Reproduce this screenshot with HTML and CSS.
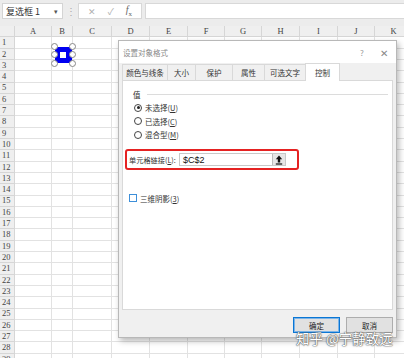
FILE: index.html
```html
<!DOCTYPE html>
<html lang="zh-CN">
<head>
    <meta charset="UTF-8">
    <title>设置对象格式</title>
    <link rel="stylesheet" href="styles.css">
</head>
<body>
    <div class="toolbar">
        <div class="namebox"><span>复选框 1</span><span class="caret">▾</span></div>
        <div class="dots">⋮</div>
        <div class="fbuttons">
            <span class="fb cancel">✕</span>
            <span class="fb ok">✓</span>
            <span class="fb fx"><i>f</i><sub>x</sub></span>
        </div>
        <div class="formula"></div>
    </div>

    <div class="sheet-wrap">
        <div class="sheet" id="sheet"></div>

        <div class="control">
            <div class="control-inner"></div>
            <span class="handle h1"></span><span class="handle h2"></span>
            <span class="handle h3"></span><span class="handle h4"></span>
            <span class="handle h5"></span><span class="handle h6"></span>
        </div>
    </div>

    <div class="dialog">
        <div class="dlg-title">
            <span class="dlg-caption">设置对象格式</span>
            <span class="dlg-help">?</span>
            <span class="dlg-close">✕</span>
        </div>
        <div class="tabs">
            <span class="tab" style="width:46px">颜色与线条</span>
            <span class="tab" style="width:29px">大小</span>
            <span class="tab" style="width:38px">保护</span>
            <span class="tab" style="width:33px">属性</span>
            <span class="tab" style="width:42px">可选文字</span>
            <span class="tab active" style="width:35px">控制</span>
        </div>
        <div class="panel">
            <div class="legend"><span>值</span><span class="rule"></span></div>
            <label class="radio checked"><span class="dot"></span>未选择(<u>U</u>)</label>
            <label class="radio"><span class="dot"></span>已选择(<u>C</u>)</label>
            <label class="radio"><span class="dot"></span>混合型(<u>M</u>)</label>

            <div class="link-box">
                <span class="link-label">单元格链接(<u>L</u>):</span>
                <div class="link-input">
                    <span>$C$2</span>
                    <span class="pick">
                        <svg width="8" height="10" viewBox="0 0 8 10">
                            <path d="M4 0.5 L7.2 4.2 H5.2 V7.5 H2.8 V4.2 H0.8 Z" fill="#111"/>
                            <rect x="0.8" y="8.4" width="6.4" height="1.2" fill="#111"/>
                        </svg>
                    </span>
                </div>
            </div>

            <label class="check"><span class="box"></span>三维阴影(<u>3</u>)</label>
        </div>
        <div class="dlg-footer">
            <span class="btn primary">确定</span>
            <span class="btn">取消</span>
        </div>
    </div>

    <div class="watermark">知乎 @宁静致远</div>

    <script>
        const sheet = document.getElementById('sheet');
        const cols = ['', 'A', 'B', 'C', 'D', 'E', 'F', 'G', 'H', 'I', 'J', 'K'];
        cols.forEach(function(c, i) {
            const d = document.createElement('div');
            d.className = i === 0 ? 'corner' : 'colhead';
            d.textContent = c;
            sheet.appendChild(d);
        });
        for (let r = 1; r <= 29; r++) {
            const h = document.createElement('div');
            h.className = 'rowhead';
            h.textContent = r;
            sheet.appendChild(h);
            for (let c = 1; c < cols.length; c++) {
                const cell = document.createElement('div');
                cell.className = 'cell';
                sheet.appendChild(cell);
            }
        }
    </script>
</body>
</html>
```

FILE: styles.css
```css
body { margin: 0; width: 404px; height: 358px; overflow: hidden; background: #fff; font-family: "Noto Sans CJK SC", "Noto Sans", sans-serif; font-size: 7.5px; color: #222; }

.toolbar { height: 26px; background: #ececec; display: flex; align-items: flex-start; padding-top: 3px; box-sizing: border-box; }
.namebox { margin-left: 2px; width: 61px; height: 16px; background: #fff; border: 1px solid #d4d4d4; box-sizing: border-box; display: flex; align-items: center; justify-content: space-between; padding: 0 4px 0 3px; font-size: 9px; color: #333; }
.namebox .caret { font-size: 7px; color: #555; }
.dots { width: 15px; text-align: center; color: #aaa; font-size: 10px; line-height: 16px; }
.fbuttons { width: 64px; height: 16px; background: #fff; border: 1px solid #d8d8d8; box-sizing: border-box; display: flex; align-items: center; justify-content: space-around; padding: 0 3px; color: #b0b0b0; font-size: 9px; }
.fb.fx { color: #666; font-family: "Liberation Serif", serif; font-size: 10px; }
.fb.fx sub { font-size: 7px; }
.formula { flex: 1; margin-left: 3px; height: 16px; background: #fff; border: 1px solid #d8d8d8; border-right: 0; box-sizing: border-box; }

.sheet-wrap { position: relative; }
.sheet { display: grid; grid-template-columns: 15px 37px 21px 39px 38px 38px 37px 37px 38px 38px 37px 38px; grid-template-rows: 11.4px; grid-auto-rows: 11.3px; font-family: "Liberation Serif", serif; font-size: 8.5px; color: #444; }
.corner, .colhead, .rowhead { background: #efefef; border-right: 1px solid #d6d6d6; border-bottom: 1px solid #d6d6d6; box-sizing: border-box; display: flex; align-items: center; justify-content: center; line-height: 1; }
.rowhead { justify-content: flex-start; padding-left: 2px; }
.cell { border-right: 1px solid #e2e2e2; border-bottom: 1px solid #e2e2e2; box-sizing: border-box; }

.control { position: absolute; left: 55px; top: 21px; width: 17px; height: 16px; background: #0000f0; }
.control-inner { position: absolute; left: 5px; top: 5px; width: 6px; height: 6px; background: #fff; }
.handle { position: absolute; width: 5px; height: 5px; border: 1px solid #888; border-radius: 50%; background: #fff; }
.h1 { left: -4px; top: -4px; } .h2 { right: -4px; top: -4px; }
.h3 { left: -4px; top: 4px; } .h4 { right: -4px; top: 4px; }
.h5 { left: -4px; bottom: -4px; } .h6 { right: -4px; bottom: -4px; }

.dialog { position: absolute; left: 118px; top: 40px; width: 279px; height: 298px; box-sizing: border-box; background: #f0f0f0; border: 1px solid #b8b8b8; box-shadow: 2px 3px 6px rgba(0,0,0,0.28); padding: 0 3px; display: flex; flex-direction: column; }
.dlg-title { height: 22px; margin: 0 -3px; background: #fff; display: flex; align-items: center; padding: 0 4px; color: #8a8a8a; }
.dlg-caption { flex: 1; }
.dlg-help { width: 28px; text-align: center; color: #999; font-size: 8px; }
.dlg-close { width: 16px; text-align: center; color: #888; font-size: 10px; }

.tabs { height: 17px; display: flex; align-items: flex-end; }
.tab { height: 16px; box-sizing: border-box; border: 1px solid #d9d9d9; border-bottom: 0; margin-right: -1px; display: flex; align-items: center; justify-content: center; color: #333; background: #f0f0f0; white-space: nowrap; }
.tab.active { height: 18px; background: #fff; position: relative; z-index: 1; margin-bottom: -1px; }

.panel { height: 230px; background: #fff; border: 1px solid #d9d9d9; box-sizing: border-box; padding: 6px 4px 0 2px; }
.legend { height: 14px; display: flex; align-items: center; padding-left: 8px; color: #333; }
.legend .rule { flex: 1; height: 1px; background: #dcdcdc; margin-left: 6px; }
.radio { height: 13.5px; display: flex; align-items: center; padding-left: 9px; color: #333; }
.radio .dot { width: 8px; height: 8px; border: 1px solid #444; border-radius: 50%; box-sizing: border-box; margin-right: 3px; position: relative; }
.radio.checked .dot::after { content: ""; position: absolute; left: 1.5px; top: 1.5px; width: 3px; height: 3px; border-radius: 50%; background: #222; }

.link-box { margin-top: 7.5px; width: 174px; height: 21px; box-sizing: border-box; border: 2px solid #e52222; border-radius: 3px; display: flex; align-items: center; padding-left: 2px; }
.link-label { width: 50px; color: #333; white-space: nowrap; font-size: 7.2px; }
.link-input { width: 107px; height: 13px; box-sizing: border-box; border: 1px solid #c8c8c8; display: flex; align-items: center; justify-content: space-between; padding-left: 3px; font-size: 9px; font-family: "Liberation Sans", sans-serif; color: #111; }
.pick { width: 12px; height: 11px; background: #e6e6e6; border-left: 1px solid #bbb; display: flex; align-items: center; justify-content: center; }

.check { margin-top: 21.5px; height: 13px; display: flex; align-items: center; padding-left: 4px; color: #333; }
.check .box { width: 8px; height: 8px; border: 1px solid #3d8fd9; box-sizing: border-box; margin-right: 3px; }

.dlg-footer { flex: 1; display: flex; justify-content: flex-end; align-items: flex-start; padding-top: 7px; gap: 6px; }
.btn { width: 47px; height: 16px; box-sizing: border-box; border: 1px solid #adadad; background: #e1e1e1; display: flex; align-items: center; justify-content: center; color: #222; }
.btn.primary { border: 1px solid #0a76d4; box-shadow: inset 0 0 0 1px #7cb4e8; }

.watermark { position: absolute; left: 296px; top: 329px; font-size: 13.5px; line-height: 18px; white-space: nowrap; color: #fff; text-shadow: 0 0 1px #555, 0 0 1px #555, 0 0 2px #777; }
```
